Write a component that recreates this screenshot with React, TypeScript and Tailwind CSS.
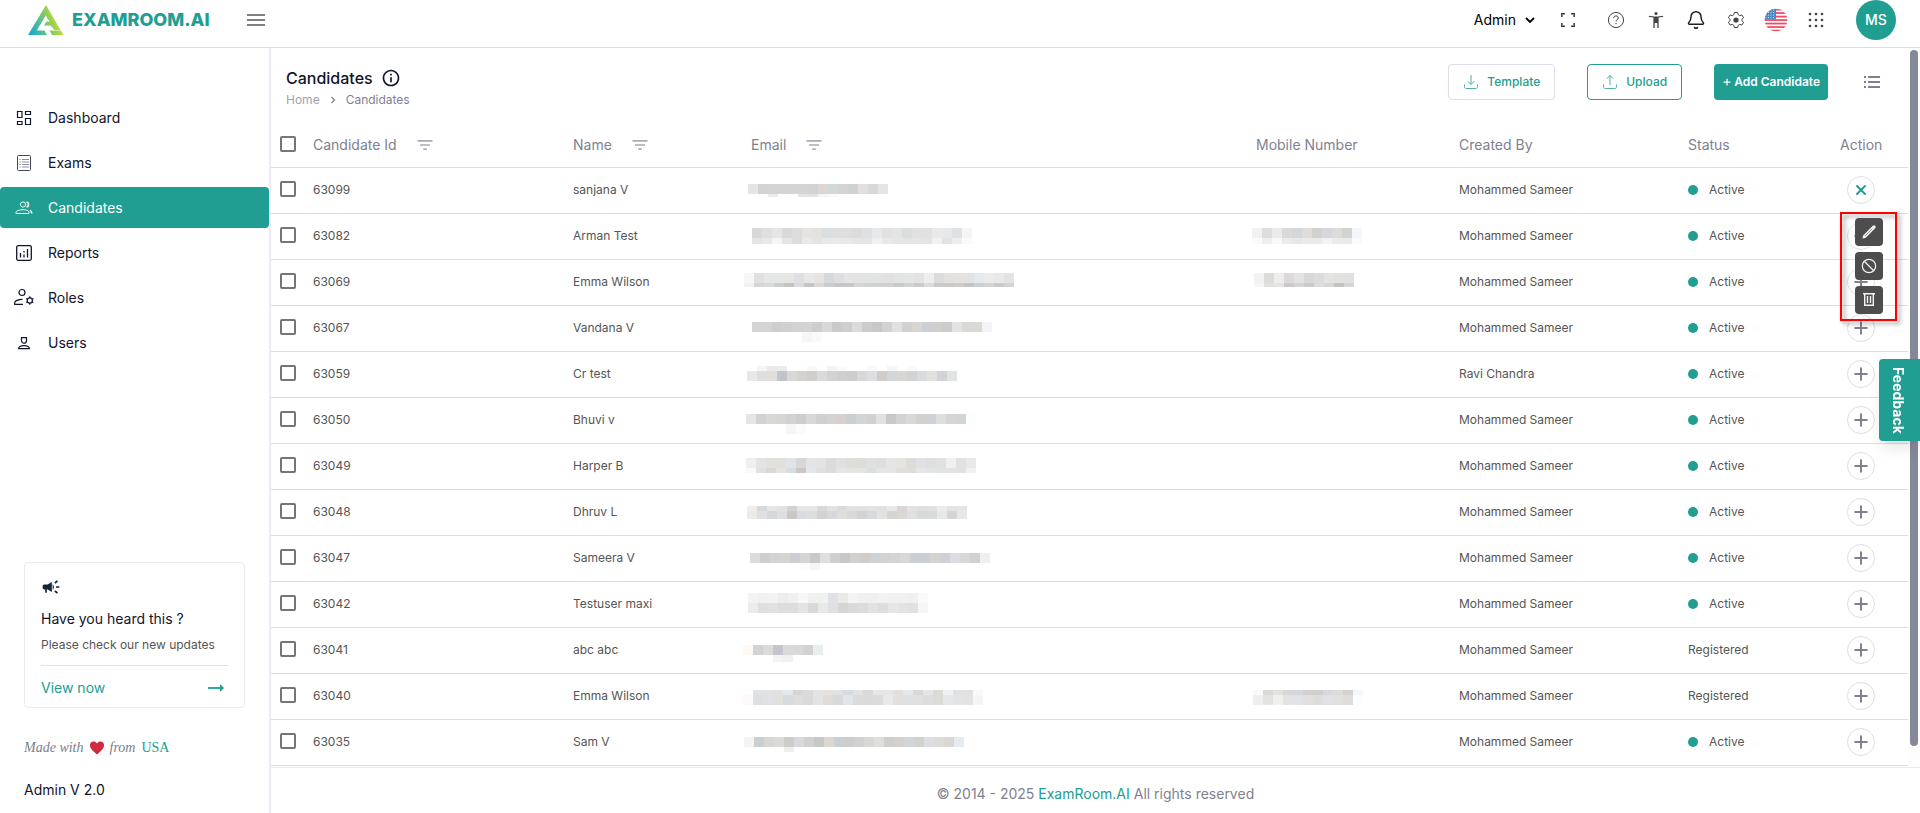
import { useState } from 'react'
import type { ReactNode } from 'react'
import { MdCampaign, MdFilterList, MdInfoOutline } from 'react-icons/md'
import { Bell, Plus, X, Ban } from 'lucide-react'

type Patch = { x: number; y: number; h: number; cells: string }

type Candidate = {
  id: string
  name: string
  email: Patch[]
  mobile?: Patch[]
  createdBy: string
  status: 'Active' | 'Registered'
}

const SAMEER = 'Mohammed Sameer'

// cells: one hex colour per block, "-" leaves a gap
const candidates: Candidate[] = [
  {
    id: '63099',
    name: 'sanjana V',
    createdBy: SAMEER,
    status: 'Active',
    email: [
      { x: 5, y: 16, h: 10, cells: 'e4e4e4 d1d2d1 d5d4d3 d2d4d5 d6d4d3 d3d4d4 d2d2d2 dcd6d2 d2d8d9 d4d4d4 d0d1d1 e3dfdf d7d8d9 e4e5e7' },
      { x: 5, y: 26, h: 3, cells: '- - ebebeb - - e3e3e3 e2e2e2 f7f3f0 f5faff' },
    ],
  },
  {
    id: '63082',
    name: 'Arman Test',
    createdBy: SAMEER,
    status: 'Active',
    email: [
      { x: 9, y: 14, h: 10, cells: 'd8d8d8 dfdfdf e5e5e5 d9d9da dcdcdc e5e4e3 e3e2de dbdee0 dededf dededf dcdbda dee0e1 e6e8eb e3e1e0 e3e5e4 dadddc e0e1e2 e2e1df e9e9ea e6e8eb dfe2e1 f5f5f5' },
      { x: 9, y: 24, h: 6, cells: 'e4e4e4 e8e8e7 f4f6f5 e7e5e3 dadcde e9e9e8 e3e3e0 e7e9e9 e8e9ea e7e8e9 e7e6e4 e4e4e4 eff0f2 e8e8e8 e6e6e7 e3e4e5 e6e5e3 e5e4e2 f0f1f1 e3e3e4 ecedf0 f9f9f9' },
    ],
    mobile: [
      { x: 1, y: 14, h: 10, cells: 'f1f1f1 dddfde ebebeb d9d9d7 d4d6d8 dedddb d1d1d2 d5d7da dddcda d1d3d2 f4f6f9' },
      { x: 1, y: 24, h: 6, cells: 'fafafa eeeeee f8f8f8 ecebe9 e6e7e8 ebeae8 ebeae8 f1f2f3 ecebea ebeae8 f9fafc' },
    ],
  },
  {
    id: '63069',
    name: 'Emma Wilson',
    createdBy: SAMEER,
    status: 'Active',
    email: [
      { x: 1, y: 13, h: 10, cells: 'f8f7f5 e0e0e0 e6e7e5 e4e7e6 e6e6e4 dedfe0 e7e7e7 e6e5e4 d6d8da dedee0 e4e4e5 e3e3e4 e2e4e4 e2e2e2 e2e0e0 e2e4e3 e4e6e6 e3e3e2 eeeeef dbdddc e2e1e0 e3e2e1 e3e2e1 e4e9ee ebebec e9e9ea e3e3e4' },
      { x: 1, y: 23, h: 4, cells: 'f2f1ef d5d5d3 dadbd8 cccfd0 c4c4c4 dadcdd c5c5c5 dad9d7 cbcccd c5c7c7 c7c7c7 d4d6d5 cfd1d3 cfd0d2 d1cfcf c8cac8 d1d4d3 c8cccd dadcda cccac8 cccac8 cdccca c7c5c4 ccd0d4 d5d3d0 c9cbcb d4d3d3' },
    ],
    mobile: [
      { x: 3, y: 13, h: 10, cells: 'f2f2f2 dddcda ededed dbdad8 e2e3e2 d7d7d7 dcdcdd e3e3e1 e1e1df dfe0e1' },
      { x: 3, y: 23, h: 4, cells: 'f5f5f5 e2e2e1 e4e4e4 cdc9c8 d2d5d8 cbcbcc dddddd d8d7d4 c3c3c2 d6d6d6' },
    ],
  },
  {
    id: '63067',
    name: 'Vandana V',
    createdBy: SAMEER,
    status: 'Active',
    email: [
      { x: 9, y: 16, h: 10, cells: 'd5d4d3 d3d4d6 cfcecd d0d0cf d2d4d3 d3d3d3 cccdcc d8d8d7 cacacb cecece dadcdb cdcccc c8c8ca d2d2d2 e0e0e0 d2d1cf d6d5d2 cccfd3 d1cfce cccccc e3e3e2 dad9d8 d9d9d5 f3f3f8' },
      { x: 9, y: 26, h: 10, cells: '- - - - - f6f7f5 f8fbfa' },
    ],
  },
  {
    id: '63059',
    name: 'Cr test',
    createdBy: 'Ravi Chandra',
    status: 'Active',
    email: [
      { x: 4, y: 14, h: 5, cells: '- f5f5f5 e9eaec ebebeb - - f8f8f8 - f4f4f4 fafafa - - f9f9f9 - f5f5f5 - fafafa' },
      { x: 4, y: 19, h: 10, cells: 'e8e8e8 dddee0 e0dfdb c1c5c9 d8d8d9 d3d2d0 cfcecd d8dadc d3d2d3 d0cfcf cecdcc d7d9d8 dcdee2 cfcdcb d3d5d7 d8d7d4 d2d4d4 d9dbde e1e1df d1d3d6 e1e3e3' },
    ],
  },
  {
    id: '63050',
    name: 'Bhuvi v',
    createdBy: SAMEER,
    status: 'Active',
    email: [
      { x: 3, y: 16, h: 10, cells: 'e6e5e4 d1d2d4 d8d8d5 d6d6d5 d2d2d2 cdcdce d8d8d8 cfd0d2 d2d3d2 d7d0ce cdced0 d2d5d6 d1d1d1 e0e2e1 c9c8c7 d0d3d2 d8d8d4 d1d1ce cfd1d8 dededf d6d4d4 d5d4d4 fbfefe' },
      { x: 3, y: 26, h: 10, cells: '- - - - f6f6f6 fafcfb' },
    ],
  },
  {
    id: '63049',
    name: 'Harper B',
    createdBy: SAMEER,
    status: 'Active',
    email: [
      { x: 3, y: 14, h: 10, cells: 'efefee e2e3e3 e2e0df e1e0dd dfe4e8 d9d7d6 e2e4e7 e3e3e3 dbdbdc dee0e4 dfddda dddcd9 dee0e1 dbdfe1 e5e5e5 e3e3e1 dfdbd9 dfe1e6 dddfe0 dfe1e2 f0f0f0 e2e1df e8e8e8' },
      { x: 3, y: 24, h: 5, cells: 'f9f9f9 e0e0e0 d8d7d5 e5e4e2 d9dcdf cac7c6 e4e6e9 e1e0de dbdbda e3e4e5 e3e3e1 e3e4e3 dddede e2e4e5 e5e5e4 dfdedd dfddda e5e6e8 e2e3e3 e1e3e2 e4e3e3 e2e1df f1f1f1' },
    ],
  },
  {
    id: '63048',
    name: 'Dhruv L',
    createdBy: SAMEER,
    status: 'Active',
    email: [
      { x: 4, y: 16, h: 5, cells: 'f1ede7 d5d9dd e5e6e8 e2e2e2 d3d2d0 e6e6e6 e4e6e8 dad9d7 e2e3e5 dcdbd9 e0e1e1 e1e2e1 e3e3e4 e1e1df e9e9ea dad5d2 e2e3e5 dee0df e2e1df eaebee e3e3e3 e5e5e5' },
      { x: 4, y: 21, h: 8, cells: 'eceae6 dee0e1 d7d8da dedfe0 cbc7c4 dadae0 dbdfde d2d2d1 d6d8db dfdedb d9dad7 d1d3d4 d7dadd e2e3e1 d6d5d3 dbd7d3 dddfe3 d8dada d8dadb e6e9e8 d5d5d5 e8e8e8' },
    ],
  },
  {
    id: '63047',
    name: 'Sameera V',
    createdBy: SAMEER,
    status: 'Active',
    email: [
      { x: 7, y: 17, h: 10, cells: 'dcdbdb d0cecd d2d4d3 d4d5d2 cdcdd3 d5d5d1 c9c9c9 dfdfdf cecfd1 c8c8c9 d2d0cf d1ccc8 cfd1d3 d1d2d4 d4d4d3 dad8d7 cccfd1 cccfd1 d4d4cf d0d1d7 dddde0 d8d6d7 d1d1d1 efefef' },
      { x: 7, y: 27, h: 7, cells: '- - - - - fcfcfb f5f6f8' },
    ],
  },
  {
    id: '63042',
    name: 'Testuser maxi',
    createdBy: SAMEER,
    status: 'Active',
    email: [
      { x: 5, y: 11, h: 10, cells: 'f3f3f2 f0f2f2 f2f2f2 ececec f0f0f0 f6f8f8 f1f1f1 eff0f0 e0e1e5 e9e9e8 f4f4f5 f0f0f0 f0f0f0 f1f3f3 f1f1f1 f1f1f1 f0f0f0 fafafa' },
      { x: 5, y: 21, h: 10, cells: 'ececec e0dedf e0e2e1 dedddb dddddf e3e5e5 d9d9da e8e8e8 dfe0e3 d6d6d4 dbdad8 dadcde e1e3e2 dddedc e7e6e4 e1e3e5 e1e1e2 f6f6f6' },
    ],
  },
  {
    id: '63041',
    name: 'abc abc',
    createdBy: SAMEER,
    status: 'Registered',
    email: [
      { x: 0, y: 17, h: 10, cells: 'fdf8f4 d1d3d2 dcdbd9 c4c6cc dadadb d9d8d6 d3d1d2 e9edee' },
      { x: 0, y: 27, h: 7, cells: '- - - f3f3f4 f0f0f0' },
    ],
  },
  {
    id: '63040',
    name: 'Emma Wilson',
    createdBy: SAMEER,
    status: 'Registered',
    email: [
      { x: 0, y: 16, h: 5, cells: '- e2e2e2 e2e2e2 e1e1e1 e5e8eb d5d5d4 dbdbdb e3e3e3 e4e1df dfe1e5 d9dadd e2e2e2 d9d9dd e8e7e6 e4e6ea e2e0de e6e7e7 d7d8d7 e4e6e8 dcdbd8 f0f1f2 e1e1e1 e1e1e1 f8f9fb' },
      { x: 0, y: 21, h: 10, cells: 'fdf9f9 dde0e1 e1e1e5 e2e0dd d8dade dfdddb dadada e3e3e3 dddcda d8d9d9 e1e4e8 dbdbdb dcdad9 dcdbdc e9e9e9 e0e1df dfe0e4 e1e0de dddddf dddbd8 e5e6e6 e2e4e7 e3e3e3 f5f5f5' },
    ],
    mobile: [
      { x: 2, y: 16, h: 5, cells: 'fafafa d9d9d8 e2e1e0 d8d7d6 d4d6d9 d2d1cf cfcfd0 d6d8db dbdbda d3d2cf f4f7fb' },
      { x: 2, y: 21, h: 10, cells: 'eeeeee e3e3e3 f2f0ed e3e3e3 e2e3e6 dfe0df dfdddb e0e1e4 e0e0e1 dddddc fcfdfe' },
    ],
  },
  {
    id: '63035',
    name: 'Sam V',
    createdBy: SAMEER,
    status: 'Active',
    email: [
      { x: 1, y: 17, h: 10, cells: 'f5f4f2 cccfd1 d7d6d3 dadbd9 cdccc9 d8d9dc d1d0cf c8c8c8 dcd7d1 cbcfd3 cdcdcc d0d1d3 d7d7d6 e1dddb cfcfce d2d1ce d2d6d9 d0d2d0 dbdde0 dddbd9 d8d7d4 e6ebef' },
      { x: 1, y: 27, h: 5, cells: '- - - fdfdfd eeeeee' },
    ],
  },
]

// Masked value, drawn as coarse blocks
function Masked({ patches, label }: { patches: Patch[]; label: string }) {
  return (
    <svg className="block h-11 w-[290px]" viewBox="0 0 290 44" role="img" aria-label={label} shapeRendering="crispEdges">
      {patches.map((patch) =>
        patch.cells.split(' ').map((cell, i) =>
          cell === '-' ? null : (
            <rect key={`${patch.y}-${i}`} x={patch.x + i * 10} y={patch.y} width="10" height={patch.h} fill={`#${cell}`} />
          ),
        ),
      )}
    </svg>
  )
}

function Logo() {
  return (
    <a href="#" className="flex items-center gap-2" aria-label="ExamRoom.AI">
      <svg className="h-[30px] w-9" viewBox="0 0 36 30">
        <defs>
          <linearGradient id="logo" gradientUnits="userSpaceOnUse" x1="2" y1="28" x2="33" y2="16">
            <stop offset="0" stopColor="#12a9d8" />
            <stop offset="0.5" stopColor="#6cc57c" />
            <stop offset="1" stopColor="#d6df20" />
          </linearGradient>
        </defs>
        <path
          fill="url(#logo)"
          d="M18 0 32.500 25H26.500L22.500 20.500H16L18.500 16.500H21.500L17.800 10.500 8.800 25.500H16.500L19 30H0ZM21.500 25.500H32.800L35.500 30H24Z"
        />
      </svg>
      <span className="text-lg leading-5 font-extrabold text-[#209e91]">EXAMROOM.AI</span>
    </a>
  )
}

function DashboardIcon() {
  return (
    <svg className="h-4 w-4" viewBox="0 0 16 16" fill="none" stroke="currentColor" strokeWidth="1.200">
      <path d="M1.500 1.500h4.500v6H1.500zM9.500 1.500h5v3h-5zM1.500 11.500h4.500v3H1.500zM9.500 8.500h5v6h-5z" />
    </svg>
  )
}

function ExamsIcon() {
  return (
    <svg className="h-4 w-4" viewBox="0 0 16 16" fill="none" stroke="#45485c">
      <rect x="1.500" y="0.500" width="13" height="15" rx="1" />
      <path d="M3.500 4.500h1.300M3.500 7h1.300M3.500 9.500h1.300M3.500 12h1.300M6 4.500h7M6 7h7M6 9.500h7M6 12h7" stroke="#8c8e9c" />
    </svg>
  )
}

function UsersIcon() {
  return (
    <svg className="h-5 w-5" viewBox="0 0 20 20" fill="none" stroke="currentColor">
      <circle cx="9" cy="6.500" r="2.600" />
      <path d="M2 15.500v-1.200c0-1.500 3.500-2.600 7-2.600s6 1.100 6 2.600v1.200z" />
      <path d="M12.500 4c1.700.3 2 1.300 2 2.500s-.5 2.200-2 2.500M16 12.200c1.200.7 1.800 1.500 1.800 3.300" strokeWidth="1.600" />
    </svg>
  )
}

function ReportsIcon() {
  return (
    <svg className="h-4 w-4" viewBox="0 0 16 16" fill="none" stroke="currentColor" strokeWidth="1.300">
      <rect x="0.700" y="0.700" width="14.600" height="14.600" rx="1.500" />
      <path d="M4.500 8v4.500M8 6v1.500M8 9.500v3M11.500 4v8.500" />
    </svg>
  )
}

function RolesIcon() {
  return (
    <svg className="h-5 w-5" viewBox="0 0 20 20" fill="none" stroke="currentColor" strokeWidth="1.200">
      <circle cx="8" cy="4.500" r="3" />
      <path d="M8.500 11.300C4 11.300.7 13 .7 14.800v1.500H9" />
      <circle cx="15.800" cy="12.500" r="2.600" />
      <path d="M15.800 8.300v1.600M15.800 15.100v1.600M12.200 10.400l1.300.8M18.100 13.800l1.300.8M12.200 14.600l1.300-.8M18.100 11.200l1.300-.8" />
    </svg>
  )
}

function UserIcon() {
  return (
    <svg className="h-5 w-5" viewBox="0 0 20 20" fill="none" stroke="currentColor" strokeWidth="1.200">
      <path d="M7.500 4.600h5v2.800c0 1.700-1 2.800-2.500 2.800S7.500 9.100 7.500 7.400zM4.700 15.700c0-2 2-3 5.300-3s5.300 1 5.300 3z" />
    </svg>
  )
}

function TrayIcon({ up }: { up?: boolean }) {
  return (
    <svg className="h-4 w-4" viewBox="0 0 16 16" fill="none" stroke="currentColor" opacity="0.8">
      <path d="M1.500 10.500v2.300c0 1 .7 1.700 1.700 1.700h9.600c1 0 1.700-.7 1.700-1.700v-2.300" />
      <path d={up ? 'M8 11V1.500M4.800 4.700 8 1.500l3.200 3.200' : 'M8 1v9.500M4.800 7.300 8 10.500l3.200-3.200'} />
    </svg>
  )
}

function ListIcon() {
  return (
    <svg className="h-4 w-4" viewBox="0 0 16 16" fill="currentColor">
      <path d="M0 2h2v2H0zM0 7h2v2H0zM0 12h2v2H0zM4 2h12v2H4zM4 7h12v2H4zM4 12h12v2H4z" />
    </svg>
  )
}

function FullscreenIcon() {
  return (
    <svg className="h-4 w-4" viewBox="0 0 16 16" fill="none" stroke="currentColor" strokeWidth="1.600">
      <path d="M1.800 5V1.800H5M11 1.800h3.200V5M14.200 11v3.200H11M5 14.200H1.800V11" />
    </svg>
  )
}

function HelpIcon() {
  return (
    <svg className="h-[18px] w-[18px]" viewBox="0 0 18 18" fill="none" stroke="currentColor">
      <circle cx="9" cy="9" r="7.600" />
      <path d="M6.700 7.100c0-1.300 1-2.200 2.300-2.200s2.300.8 2.300 2.100c0 1.600-2.300 1.800-2.300 3.500M9 12v1.200" />
    </svg>
  )
}

function AccessibilityIcon() {
  return (
    <svg className="h-4 w-4" viewBox="0 0 16 16" fill="currentColor">
      <circle cx="8" cy="1.600" r="1.500" />
      <path d="M1 3.800c2 .5 4.500.8 7 .8s5-.3 7-.8l.3 1c-1.400.4-3.200.7-4.700.8V16H9.300v-5H6.700v5H5.400V5.600C3.900 5.500 2.100 5.200.7 4.800z" />
    </svg>
  )
}

function GearIcon() {
  return (
    <svg className="h-[18px] w-[18px]" viewBox="0 0 18 18">
      <path
        fill="none"
        stroke="currentColor"
        strokeLinejoin="round"
        d="M7.300 1.500h3.400l.5 2.200 1.500.9 2.200-.7 1.700 2.900-1.700 1.500v1.400l1.700 1.500-1.700 2.900-2.200-.7-1.500.9-.5 2.200H7.300l-.5-2.200-1.500-.9-2.200.7-1.700-2.900 1.700-1.500V8.300L1.400 6.800l1.700-2.900 2.200.7 1.500-.9z"
      />
      <circle cx="9" cy="9" r="2.600" fill="currentColor" />
    </svg>
  )
}

function FlagIcon() {
  return (
    <svg className="h-6 w-6" viewBox="0 0 24 24">
      <clipPath id="flag">
        <circle cx="12" cy="12" r="11.300" />
      </clipPath>
      <g clipPath="url(#flag)">
        <rect width="24" height="24" fill="#fff" />
        {[0, 1, 2, 3, 4, 5, 6].map((i) => (
          <rect key={i} y={0.7 + i * 3.5} width="24" height="1.750" fill="#f2485f" />
        ))}
        <rect width="12" height="11.200" fill="#4a87c4" />
        {[2, 4.5, 7, 9.5].map((y) =>
          [2, 4.5, 7, 9.5].map((x) => <circle key={`${x}-${y}`} cx={x} cy={y} r="0.500" fill="#fff" />),
        )}
      </g>
    </svg>
  )
}

function AppsIcon() {
  return (
    <svg className="h-4 w-4" viewBox="0 0 16 16" fill="currentColor">
      {[2, 8, 14].map((y) => [2, 8, 14].map((x) => <circle key={`${x}-${y}`} cx={x} cy={y} r="1.300" />))}
    </svg>
  )
}

function PencilIcon() {
  return (
    <svg className="h-4 w-4" viewBox="0 0 16 16">
      <path d="M1.500 14.500l.6-3L11.800 1.800a1.500 1.500 0 0 1 2.400 2.400L4.500 13.900z" fill="#f3f3f3" />
      <path d="M4 12l7.200-7.200" stroke="#4d4d4d" strokeWidth="0.600" />
    </svg>
  )
}

function TrashIcon() {
  return (
    <svg className="h-4 w-4" viewBox="0 0 16 16" fill="none" stroke="#f3f3f3" strokeWidth="1.400">
      <path d="M2 1.700h12M3.700 1.700v11.600h8.600V1.700M6.500 4v7M9.500 4v7" />
    </svg>
  )
}

const navItems = [
  { label: 'Dashboard', icon: <DashboardIcon /> },
  { label: 'Exams', icon: <ExamsIcon /> },
  { label: 'Candidates', icon: <UsersIcon /> },
  { label: 'Reports', icon: <ReportsIcon /> },
  { label: 'Roles', icon: <RolesIcon /> },
  { label: 'Users', icon: <UserIcon /> },
]

function IconButton({ label, children }: { label: string; children: ReactNode }) {
  return (
    <button type="button" aria-label={label} className="flex h-10 w-10 items-center justify-center text-[#444]">
      {children}
    </button>
  )
}

function Header() {
  return (
    <header className="flex h-12 shrink-0 items-start border-b border-[#dcdce8] pr-6 pl-7">
      <div className="flex h-10 flex-1 items-center gap-9">
        <Logo />
        <button type="button" aria-label="Toggle menu" className="text-[#555]">
          <svg className="h-4 w-5" viewBox="0 0 20 16" stroke="currentColor" strokeWidth="1.600">
            <path d="M1 3h18M1 8h18M1 13h18" />
          </svg>
        </button>
      </div>
      <div className="flex h-10 items-center">
        <button type="button" className="mr-3 flex items-center gap-2 text-sm text-black">
          Admin
          <svg className="h-2 w-3" viewBox="0 0 12 8" fill="none" stroke="currentColor" strokeWidth="1.800">
            <path d="M2 2l4 4 4-4" />
          </svg>
        </button>
        <div className="mr-2">
          <IconButton label="Full screen"><FullscreenIcon /></IconButton>
        </div>
        <IconButton label="Help"><HelpIcon /></IconButton>
        <IconButton label="Accessibility"><AccessibilityIcon /></IconButton>
        <IconButton label="Notifications"><Bell className="h-5 w-5 text-[#222]" strokeWidth={1.8} /></IconButton>
        <IconButton label="Settings"><GearIcon /></IconButton>
        <IconButton label="Language"><FlagIcon /></IconButton>
        <IconButton label="Apps"><AppsIcon /></IconButton>
        <button type="button" className="ml-5 h-10 w-10 rounded-full bg-[#209e91] text-sm font-medium text-white">
          MS
        </button>
      </div>
    </header>
  )
}

function Sidebar() {
  return (
    <aside className="flex w-[271px] shrink-0 flex-col border-r-2 border-[#ebebf3]">
      <nav className="flex flex-1 flex-col gap-1 pt-[49px]">
        {navItems.map((item) => (
          <a
            key={item.label}
            href="#"
            className={
              item.label === 'Candidates'
                ? 'flex h-[41px] items-center gap-3 rounded bg-[#209e91] pl-3 text-sm text-white'
                : 'flex h-[41px] items-center gap-3 rounded pl-3 text-sm text-[#11142d]'
            }
          >
            <span className="flex w-6 justify-center">{item.icon}</span>
            {item.label}
          </a>
        ))}
      </nav>
      <div className="mx-6 rounded border border-[#ebebee] px-4 pt-3 pb-[9px]">
        <MdCampaign className="h-6 w-5 text-[#11263c]" />
        <h2 className="mt-2 text-sm leading-6 text-[#11142d]">Have you heard this ?</h2>
        <p className="mt-1 mb-2.5 text-xs leading-5 text-[#555]">Please check our new updates</p>
        <a href="#" className="flex items-center justify-between border-t border-[#e4e4e8] pt-3 pr-1 text-sm leading-5 text-[#209e91]">
          View now
          <svg className="h-2 w-4" viewBox="0 0 16 8">
            <path d="M0 4h13" stroke="currentColor" strokeWidth="1.800" />
            <path d="M12 0l4 4-4 4z" fill="currentColor" />
          </svg>
        </a>
      </div>
      <p className="mx-6 mt-7 flex items-center gap-1.5 font-['Liberation_Serif',serif] text-sm leading-6 text-[#7b7e8c]">
        <span className="italic">Made with</span>
        <svg className="h-3.5 w-3.5" viewBox="0 0 14 14" role="img" aria-label="love">
          <path fill="#d12b41" d="M7 13.500C3 10 0 7.500 0 4.500a3.700 3.700 0 0 1 7-2 3.700 3.700 0 0 1 7 2c0 3-3 5.500-7 9z" />
        </svg>
        <span className="italic">from</span>
        <span className="text-[#209e91]">USA</span>
      </p>
      <p className="mx-6 mt-5 mb-[13px] text-sm leading-5 text-[#11142d]">Admin V 2.0</p>
    </aside>
  )
}

function Check({ label }: { label: string }) {
  return (
    <input
      type="checkbox"
      aria-label={label}
      className="mb-0.5 block h-4 w-4 appearance-none rounded-xs border-2 border-[#757575] bg-white checked:bg-[#209e91]"
    />
  )
}

function FilterButton({ label }: { label: string }) {
  return (
    <button type="button" aria-label={label} className="text-[#a9abb8]">
      <MdFilterList className="h-5 w-5" />
    </button>
  )
}

function RowMenu() {
  return (
    <div className="absolute top-9 -left-[7px] z-10 w-[57px] px-[15px] pt-1.5 pb-[7px]">
      <div className="pointer-events-none absolute inset-0 border-2 border-[#ff0000] drop-shadow-[3px_3px_2px_rgba(0,0,0,0.4)]" />
      <div className="relative flex flex-col gap-1.5">
        <button type="button" aria-label="Edit" className="flex h-7 w-7 items-center justify-center rounded bg-[#4d4d4d]">
          <PencilIcon />
        </button>
        <button type="button" aria-label="Disable" className="flex h-7 w-7 items-center justify-center rounded bg-[#4d4d4d]">
          <Ban className="h-4 w-4 text-[#f3f3f3]" strokeWidth={1.8} />
        </button>
        <button type="button" aria-label="Delete" className="flex h-7 w-7 items-center justify-center rounded bg-[#4d4d4d]">
          <TrashIcon />
        </button>
      </div>
    </div>
  )
}

function CandidateTable() {
  const [openId, setOpenId] = useState<string | null>('63099')

  return (
    <table className="w-full table-fixed border-separate border-spacing-0 text-left [&_td]:border-b [&_td]:border-[#dcdce8] [&_td]:p-0 [&_td]:pb-px [&_th]:border-b [&_th]:border-[#dcdce8] [&_th]:p-0">
      <colgroup>
        <col className="w-[42px]" />
        <col className="w-[260px]" />
        <col className="w-[170px]" />
        <col />
        <col className="w-[208px]" />
        <col className="w-[229px]" />
        <col className="w-[152px]" />
        <col className="w-[68px]" />
      </colgroup>
      <thead className="text-sm text-[#7f8190]">
        <tr className="h-[46px] [&_th]:font-normal">
          <th><div className="pl-[9px]"><Check label="Select all" /></div></th>
          <th><div className="flex items-center gap-[18px]">Candidate Id <FilterButton label="Filter by id" /></div></th>
          <th><div className="flex items-center gap-[18px]">Name <FilterButton label="Filter by name" /></div></th>
          <th><div className="flex items-center gap-[18px] pl-2">Email <FilterButton label="Filter by email" /></div></th>
          <th><div className="pl-[5px]">Mobile Number</div></th>
          <th>Created By</th>
          <th>Status</th>
          <th>Action</th>
        </tr>
      </thead>
      <tbody className="text-xs text-[#555]">
        {candidates.map((row) => (
          <tr key={row.id} className="h-[46px]">
            <td><div className="pl-[9px]"><Check label={`Select ${row.id}`} /></div></td>
            <td>{row.id}</td>
            <td>{row.name}</td>
            <td><Masked patches={row.email} label="Hidden email" /></td>
            <td>{row.mobile && <Masked patches={row.mobile} label="Hidden mobile number" />}</td>
            <td>{row.createdBy}</td>
            <td>
              <div className="flex items-center gap-[11px]">
                {row.status === 'Active' && <span className="h-2.5 w-2.5 rounded-full bg-[#209e91]" />}
                {row.status}
              </div>
            </td>
            <td>
              <div className="relative ml-[7px] w-7">
                <button
                  type="button"
                  aria-label="Row actions"
                  aria-expanded={openId === row.id}
                  onClick={() => setOpenId(openId === row.id ? null : row.id)}
                  className="flex h-7 w-7 items-center justify-center rounded-full border border-[#dcdee8] text-[#7f8190]"
                >
                  {openId === row.id ? (
                    <X className="h-4 w-4 text-[#209e91]" strokeWidth={3} />
                  ) : (
                    <Plus className="h-5 w-5" strokeWidth={2.4} />
                  )}
                </button>
                {openId === row.id && <RowMenu />}
              </div>
            </td>
          </tr>
        ))}
      </tbody>
    </table>
  )
}

export default function App() {
  return (
    <div className="flex h-screen flex-col overflow-hidden bg-white font-[Inter,sans-serif]">
      <Header />
      <div className="flex min-h-0 flex-1">
        <Sidebar />
        <main className="flex min-w-0 flex-1 flex-col">
          <div className="flex min-h-0 flex-1">
            <div className="min-w-0 flex-1 overflow-hidden">
              <div className="flex h-[74px] items-start justify-between pt-4 pr-7 pl-[15px]">
                <div>
                  <h1 className="flex items-center gap-2 pt-1 text-base leading-5 font-medium text-[#11142d]">
                    Candidates <MdInfoOutline className="h-5 w-5" />
                  </h1>
                  <nav aria-label="Breadcrumb" className="mt-1 flex items-center text-xs leading-4 text-[#7f8190]">
                    <a href="#" className="text-[#a0a2ae]">Home</a>
                    <svg className="mx-2.5 h-2 w-1.5" viewBox="0 0 6 8" fill="none" stroke="currentColor" strokeWidth="1.200">
                      <path d="M1.500 1l3 3-3 3" />
                    </svg>
                    <span>Candidates</span>
                  </nav>
                </div>
                <div className="flex items-center gap-8 text-xs font-medium">
                  <button type="button" className="flex h-9 items-center gap-2 rounded border border-[#dcdee8] px-3.5 text-[#209e91]">
                    <TrayIcon />
                    Template
                  </button>
                  <button type="button" className="flex h-9 items-center gap-2 rounded border border-[#209e91] px-3.5 text-[#209e91]">
                    <TrayIcon up />
                    Upload
                  </button>
                  <button type="button" className="flex h-9 items-center gap-0.5 rounded bg-[#209e91] px-2 font-semibold text-white">
                    <Plus className="h-2.5 w-2.5" strokeWidth={3} />
                    Add Candidate
                  </button>
                  <button type="button" aria-label="List view" className="ml-1 text-[#7f8190]">
                    <ListIcon />
                  </button>
                </div>
              </div>
              <CandidateTable />
            </div>
            {/* scroll track */}
            <div className="flex w-3 flex-col bg-[#fdfdfd] px-0.5 pt-0.5 pb-[21px]">
              <div className="flex-1 rounded-full bg-[#858896]" />
            </div>
          </div>
          <footer className="h-[46px] shrink-0 border-t border-[#ebebf3] pt-4 text-center text-sm leading-5 text-[#7f8190]">
            © 2014 - 2025 <a href="#" className="text-[#209e91]">ExamRoom.AI</a> All rights reserved
          </footer>
        </main>
      </div>
      <button
        type="button"
        className="fixed top-[359px] right-0 z-20 flex h-[82px] w-[41px] items-center justify-center rounded-l bg-[#209e91] pr-1 text-sm font-bold text-white shadow-lg [writing-mode:vertical-rl]"
      >
        Feedback
      </button>
    </div>
  )
}
